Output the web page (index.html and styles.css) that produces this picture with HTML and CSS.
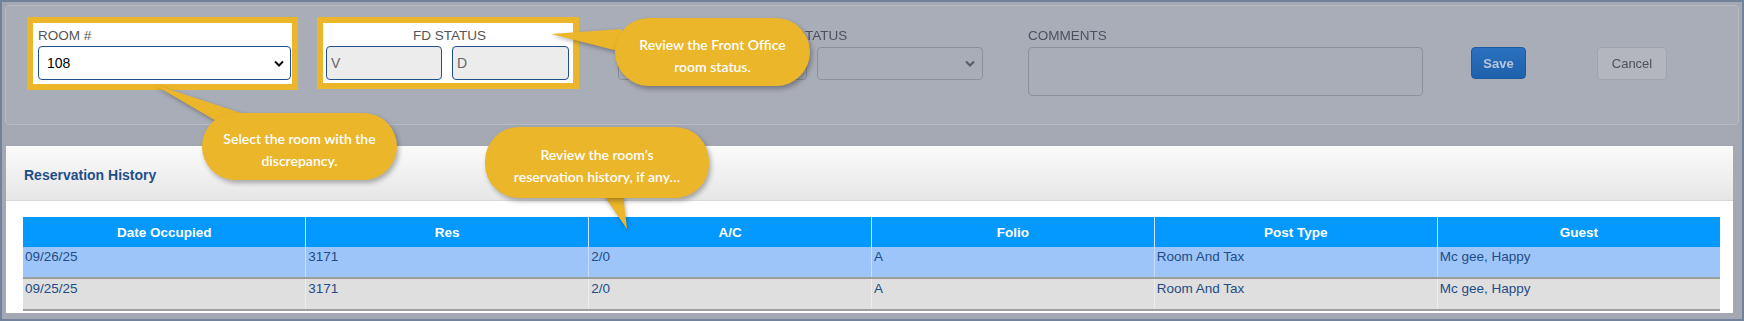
FILE: index.html
```html
<!DOCTYPE html>
<html lang="en">
<head>
    <meta charset="UTF-8">
    <title>Room Discrepancy</title>
    <link rel="stylesheet" href="styles.css">
</head>
<body>
    <div class="frame">
        <div class="top-panel">
            <div class="field-box room-box">
                <label class="field-label">ROOM #</label>
                <div class="select-wrap">
                    <select class="room-select"><option>108</option></select>
                    <svg class="chevron" width="10" height="7" viewBox="0 0 10 7"><polyline points="1,1.5 5,5.5 9,1.5"/></svg>
                </div>
            </div>
            <div class="field-box fd-box">
                <label class="field-label center">FD STATUS</label>
                <div class="pair">
                    <input class="status-input fd-v" value="V" readonly>
                    <input class="status-input fd-d" value="D" readonly>
                </div>
            </div>
            <div class="dimmed hk-group">
                <label class="field-label center hk-label">HK STATUS</label>
                <div class="pair">
                    <input class="dim-input hk-input">
                    <div class="select-wrap">
                        <select class="dim-select"></select>
                        <svg class="chevron chevron-dim" width="10" height="7" viewBox="0 0 10 7"><polyline points="1,1.5 5,5.5 9,1.5"/></svg>
                    </div>
                </div>
            </div>
            <div class="dimmed comments-group">
                <label class="field-label">COMMENTS</label>
                <textarea class="dim-input comments"></textarea>
            </div>
            <button class="dimmed btn btn-save">Save</button>
            <button class="dimmed btn btn-cancel">Cancel</button>
        </div>

        <div class="history-panel">
            <div class="panel-heading">Reservation History</div>
            <div class="panel-body">
                <table class="history-table">
                    <thead>
                        <tr>
                            <th>Date Occupied</th>
                            <th>Res</th>
                            <th>A/C</th>
                            <th>Folio</th>
                            <th>Post Type</th>
                            <th>Guest</th>
                        </tr>
                    </thead>
                    <tbody>
                        <tr class="selected">
                            <td>09/26/25</td>
                            <td>3171</td>
                            <td>2/0</td>
                            <td>A</td>
                            <td>Room And Tax</td>
                            <td>Mc gee, Happy</td>
                        </tr>
                        <tr>
                            <td>09/25/25</td>
                            <td>3171</td>
                            <td>2/0</td>
                            <td>A</td>
                            <td>Room And Tax</td>
                            <td>Mc gee, Happy</td>
                        </tr>
                    </tbody>
                </table>
            </div>
        </div>
    </div>

    <!-- tour callouts -->
    <svg class="tails" width="1744" height="321" viewBox="0 0 1744 321">
        <polygon points="551,34 622,29 622,52"/>
        <polygon points="153,84 250,116 218,122"/>
        <polygon points="603,194 623,194 627,229"/>
    </svg>
    <div class="tip tip-fd">Review the Front Office<br>room status.</div>
    <div class="tip tip-room">Select the room with the<br>discrepancy.</div>
    <div class="tip tip-history">Review the room’s<br>reservation history, if any…</div>
</body>
</html>
```

FILE: styles.css
```css
body {
    margin: 0;
    font-family: "Liberation Sans", Arial, sans-serif;
    background: #a4a8b2;
}
.frame {
    height: 321px;
    box-sizing: border-box;
    border: 2px solid #72829a;
    padding: 3px;
    background: #a4a8b2;
}
.top-panel {
    display: flex;
    align-items: flex-start;
    height: 120px;
    box-sizing: border-box;
    border: 1px solid #b8bbc3;
    border-radius: 4px;
    background: #a9adb7;
    padding: 11px 0 0 21px;
}
.top-panel > * {
    flex-shrink: 0;
}
.field-box {
    box-sizing: border-box;
    border: 6px solid #ebb62a;
    background: #fff;
    padding: 5px 0 0 5px;
}
.field-label {
    display: block;
    font-size: 13.5px;
    line-height: 16px;
    color: #555;
    margin-bottom: 2px;
}
.center {
    text-align: center;
}
.room-box {
    width: 271px;
    height: 73px;
}
.select-wrap {
    position: relative;
}
.room-select {
    appearance: none;
    width: 253px;
    height: 34px;
    box-sizing: border-box;
    border: 1px solid #1d4f8c;
    border-radius: 4px;
    background: #fff;
    font-family: inherit;
    font-size: 14px;
    color: #000;
    padding: 0 0 0 8px;
    margin: 0;
}
.chevron {
    position: absolute;
    right: 8px;
    top: 14px;
    fill: none;
    stroke: #111;
    stroke-width: 2;
}
.fd-box {
    width: 262px;
    height: 72px;
    margin-left: 19px;
    padding-left: 3px;
}
.pair {
    display: flex;
    gap: 10px;
}
.status-input {
    height: 34px;
    box-sizing: border-box;
    border: 1px solid #1d4f8c;
    border-radius: 4px;
    background: #ececec;
    font-family: inherit;
    font-size: 14px;
    color: #666;
    padding: 0 4px;
    margin: 0;
}
.fd-v {
    width: 116px;
}
.fd-d {
    width: 117px;
}

/* everything behind the tour overlay */
.dimmed {
    filter: blur(0.6px);
}
.dimmed .field-label {
    color: #4c5160;
    margin-bottom: 3px;
}
.hk-group {
    width: 365px;
    margin-left: 39px;
    padding-top: 11px;
}
.hk-label {
    padding-left: 20px;
}
.dim-input,
.dim-select {
    height: 33px;
    box-sizing: border-box;
    border: 1px solid #8c909b;
    border-radius: 4px;
    background: #a9adb7;
    margin: 0;
    appearance: none;
}
.hk-input {
    width: 189px;
}
.dim-select {
    width: 166px;
}
.chevron-dim {
    stroke: #555b68;
    top: 13px;
}
.comments-group {
    margin-left: 45px;
    padding-top: 11px;
}
.comments {
    display: block;
    width: 395px;
    height: 49px;
    resize: none;
}
.btn {
    margin-top: 30px;
    box-sizing: border-box;
    border-radius: 4px;
    font-family: inherit;
    font-size: 13px;
    padding: 0;
}
.btn-save {
    margin-left: 48px;
    width: 55px;
    height: 32px;
    border: 1px solid #1e5aa0;
    background: linear-gradient(#2a71bf, #1e60ac);
    color: #b8c5d8;
    font-weight: bold;
}
.btn-cancel {
    margin-left: 71px;
    width: 70px;
    height: 33px;
    border: 1px solid #9fa3ac;
    background: #b3b6bd;
    color: #4b505c;
}

.history-panel {
    margin: 21px 0 0 1px;
    width: 1727px;
    background: #fff;
}
.panel-heading {
    height: 55px;
    border-bottom: 1px solid #d9d9d9;
    background: linear-gradient(#fbfbfb, #e6e6e6);
    padding: 3px 0 0 18px;
    box-sizing: border-box;
    display: flex;
    align-items: center;
    font-size: 14px;
    font-weight: bold;
    color: #1f4e8a;
}
.panel-body {
    padding: 16px 13px 2px 17px;
}
.history-table {
    width: 100%;
    border-collapse: collapse;
    table-layout: fixed;
    font-size: 13.5px;
}
.history-table th {
    height: 30px;
    padding: 0;
    background: #0499fe;
    color: #fff;
    font-weight: bold;
    border-left: 1px solid #cde7fb;
}
.history-table td {
    height: 28px;
    padding: 2px 2px 0;
    vertical-align: top;
    color: #1d4c86;
    background: #dfdfdf;
    border-left: 1px solid rgba(255, 255, 255, 0.45);
    border-bottom: 2px solid #9d9d9d;
}
.history-table th:first-child,
.history-table td:first-child {
    border-left: none;
}
.history-table .selected td {
    background: #9ec5fa;
}

.tails {
    position: absolute;
    left: 0;
    top: 0;
    fill: #ebb62a;
    filter: drop-shadow(1px 2px 2px rgba(0, 0, 0, 0.3));
}
.tip {
    position: absolute;
    box-sizing: border-box;
    background: #ebb62a;
    color: #fff;
    font-family: Lato, "Open Sans", sans-serif;
    font-weight: 600;
    font-size: 14px;
    line-height: 22px;
    text-align: center;
    border-radius: 34px;
    box-shadow: 2px 3px 5px rgba(0, 0, 0, 0.3);
}
.tip-fd {
    left: 615px;
    top: 18px;
    width: 195px;
    height: 68px;
    padding-top: 16px;
}
.tip-room {
    left: 202px;
    top: 113px;
    width: 195px;
    height: 67px;
    padding-top: 15px;
}
.tip-history {
    left: 485px;
    top: 127px;
    width: 224px;
    height: 71px;
    padding-top: 17px;
}
```
